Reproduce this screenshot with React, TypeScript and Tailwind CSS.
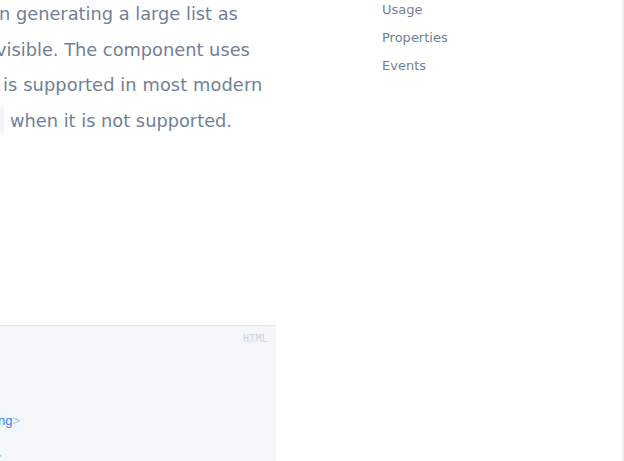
import React from 'react'

const navItems = ['Usage', 'Properties', 'Events']

export default function App() {
  return (
    <div
      className="w-[624px] h-[461px] overflow-hidden bg-white flex"
      style={{ fontFamily: '"DejaVu Sans", sans-serif' }}
    >
      <div className="w-[276px] shrink-0 flex flex-col">
        <div className="mt-[-4px] text-[17.8px] leading-[35.5px] text-[#718096] whitespace-nowrap">
          <div className="ml-[-1px]">n generating a large list as</div>
          <div className="ml-[-4px]">visible. The component uses</div>
          <div className="pl-[3px] tracking-[0.1px]"> is supported in most modern</div>
          <div className="flex items-center">
            <span className="inline-block w-[4px] h-[26px] bg-[#f1f3f7] rounded-r-[3px]" />
            <span className="pl-[6px]">when it is not supported.</span>
          </div>
        </div>

        <div className="mt-[187px] relative flex-1 border-t border-[#e2e8f0] bg-[#f4f6fa]">
          <span
            className="absolute top-[5px] right-[8px] text-[10px] tracking-wide text-[#cbd5e0]"
            style={{ fontFamily: '"DejaVu Sans Mono", monospace' }}
          >
            HTML
          </span>
          <div
            className="pt-[77px] text-[13px] leading-[35px] text-[#3b82f6] whitespace-nowrap"
            style={{ fontFamily: '"Liberation Sans", sans-serif' }}
          >
            <div className="ml-[-2px]">
              ng<span className="text-[#93c5fd]">&gt;</span>
            </div>
            <div className="ml-[-6px] text-[#93c5fd]">&gt;</div>
          </div>
        </div>
      </div>

      <div className="w-[106px] shrink-0" />

      <nav className="flex-1 flex flex-col text-[13px] leading-[28px] text-[#718096] -mt-[4px]">
        {navItems.map((item) => (
          <a key={item} href="#" className="block">
            {item}
          </a>
        ))}
      </nav>

      <div className="w-[2px] shrink-0 bg-[#f1f1f1]" />
    </div>
  )
}
